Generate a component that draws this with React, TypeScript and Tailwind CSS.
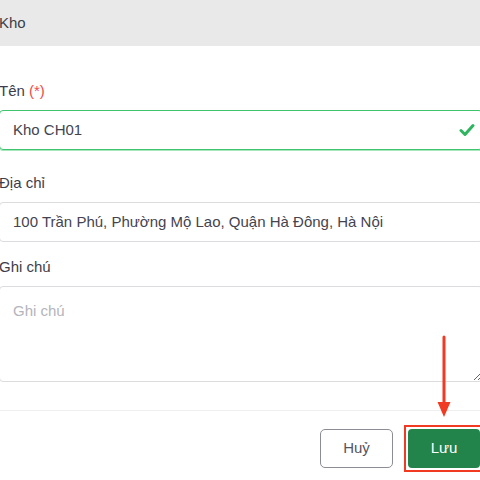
import React from "react";

export default function App() {
  const font = { fontFamily: '"Liberation Sans", Arial, sans-serif' };
  return (
    <div className="relative w-[480px] h-[480px] overflow-hidden bg-white" style={font}>
      <div className="ml-[-1px] w-[484px]">
        <div className="h-[46px] bg-[#e9e9e9] flex items-center text-[15px] text-[#3d3d4a]">
          <span>Kho</span>
        </div>
        <div className="mt-[35px] h-[20px] flex items-center text-[15px] text-[#3d3d4a]">
          Tên&nbsp;<span className="text-[#ef4a4a]">(*)</span>
        </div>
        <div className="mt-[9px] h-[40px] rounded-[4px] border border-[#3ec46d] shadow-[0_1px_0_#a8e6bd] flex items-center justify-between pl-[13px] pr-[7px] text-[15px] text-[#44444f]">
          <span>Kho CH01</span>
          <svg width="16" height="14" viewBox="0 0 16 14">
            <polyline points="2,7.5 6,11.5 14,2.5" fill="none" stroke="#2fb55f" strokeWidth="3" strokeLinecap="round" strokeLinejoin="round" />
          </svg>
        </div>
        <div className="mt-[23px] h-[20px] flex items-center text-[15px] text-[#3d3d4a]">Địa chỉ</div>
        <div className="mt-[9px] h-[40px] rounded-[4px] border border-[#dcdcdf] flex items-center pl-[13px] text-[15px] text-[#44444f]">
          100 Trần Phú, Phường Mộ Lao, Quận Hà Đông, Hà Nội
        </div>
        <div className="mt-[15px] h-[20px] flex items-center text-[15px] text-[#3d3d4a]">Ghi chú</div>
        <textarea
          placeholder="Ghi chú"
          className="mt-[9px] block w-full h-[96px] rounded-[4px] border border-[#dcdcdf] px-[13px] py-[14px] text-[15px] leading-[20px] text-[#44444f] placeholder:text-[#b4b4bc] outline-none resize-y"
          style={font}
        />
        <div className="mt-[28px] border-t border-[#f0f0f0]" />
      </div>
      <div className="mt-[14px] flex justify-end items-center gap-[11px] mr-[-4px]">
        <button className="w-[73px] h-[39px] rounded-[5px] border border-[#8c8c94] bg-white text-[15px] text-[#55555f]" style={font}>
          Huỷ
        </button>
        <div className="border-2 border-[#f03a22] p-[2px]">
          <button className="block w-[72px] h-[39px] rounded-[4px] bg-[#23844b] text-[15px] text-white" style={font}>
            Lưu
          </button>
        </div>
      </div>
      <svg className="absolute left-[436px] top-[335px]" width="16" height="84" viewBox="0 0 16 84">
        <line x1="8" y1="2" x2="8" y2="70" stroke="#f03a22" strokeWidth="3" strokeLinecap="round" />
        <polygon points="1.5,67 14.5,67 8,82" fill="#f03a22" />
      </svg>
    </div>
  );
}
